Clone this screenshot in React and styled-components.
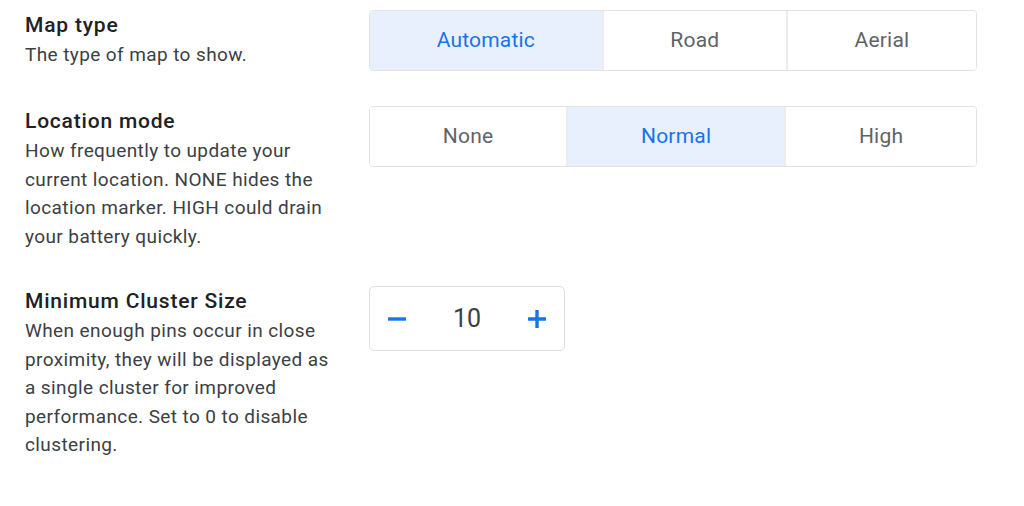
import React, { useState } from "react"
import styled, { createGlobalStyle } from "styled-components"

const GlobalStyle = createGlobalStyle`
  body {
    margin: 0;
    background: #ffffff;
    font-family: Roboto, "Liberation Sans", sans-serif;
  }
`

const Page = styled.div`
  padding: 10px 0 0 25px;
  display: flex;
  flex-direction: column;
  gap: 35px;
`

const Row = styled.div`
  display: flex;
  align-items: flex-start;
`

const Info = styled.div`
  width: 344px;
  flex: none;
`

const Title = styled.div`
  font-size: 21px;
  font-weight: 500;
  letter-spacing: 0.8px;
  color: #202124;
  line-height: 28px;
  padding-top: 1px;
  margin-bottom: 2px;
`

const Description = styled.div`
  font-size: 19px;
  letter-spacing: 0.4px;
  color: #3c4043;
  line-height: 28.5px;
  width: 312px;
`

const Segmented = styled.div`
  display: flex;
  width: 608px;
  height: 61px;
  border: 1.5px solid #e3e3e3;
  border-radius: 4px;
  box-sizing: border-box;
  overflow: hidden;
`

const Segment = styled.button`
  flex: 1 1 auto;
  border: none;
  border-left: ${(p) => (p.$first ? "none" : "2px solid #ececec")};
  background: ${(p) => (p.$active ? "#e8f0fe" : "#ffffff")};
  color: ${(p) => (p.$active ? "#1a73e8" : "#5f6368")};
  font-family: inherit;
  font-size: 21px;
  letter-spacing: 0.2px;
  padding: 0 20px 1px;
  cursor: pointer;
`

const Stepper = styled.div`
  display: flex;
  align-items: center;
  justify-content: space-between;
  width: 196px;
  height: 65px;
  border: 1.5px solid #e0e0e0;
  border-radius: 5px;
  box-sizing: border-box;
  padding: 0 17px;
`

const StepButton = styled.button`
  border: none;
  background: none;
  padding: 0;
  display: flex;
  cursor: pointer;
`

const Value = styled.span`
  font-size: 25px;
  color: #3c4043;
`

const SegmentedControl = ({ options, value, onChange }) => (
  <Segmented>
    {options.map((o, i) => (
      <Segment
        key={o}
        $first={i === 0}
        $active={o === value}
        onClick={() => onChange(o)}
      >
        {o}
      </Segment>
    ))}
  </Segmented>
)

const MinusIcon = () => (
  <svg width="20" height="20" viewBox="0 0 20 20">
    <path d="M1 10h18" stroke="#1a73e8" strokeWidth="3.4" />
  </svg>
)

const PlusIcon = () => (
  <svg width="20" height="20" viewBox="0 0 20 20">
    <path d="M1 10h18M10 1v18" stroke="#1a73e8" strokeWidth="3.4" />
  </svg>
)

export default function App() {
  const [mapType, setMapType] = useState("Automatic")
  const [mode, setMode] = useState("Normal")
  const [size, setSize] = useState(10)

  return (
    <Page>
      <GlobalStyle />
      <Row>
        <Info>
          <Title>Map type</Title>
          <Description>The type of map to show.</Description>
        </Info>
        <SegmentedControl
          options={["Automatic", "Road", "Aerial"]}
          value={mapType}
          onChange={setMapType}
        />
      </Row>
      <Row>
        <Info>
          <Title>Location mode</Title>
          <Description>
            How frequently to update your current location. NONE hides the
            location marker. HIGH could drain your battery quickly.
          </Description>
        </Info>
        <SegmentedControl
          options={["None", "Normal", "High"]}
          value={mode}
          onChange={setMode}
        />
      </Row>
      <Row>
        <Info>
          <Title>Minimum Cluster Size</Title>
          <Description>
            When enough pins occur in close proximity, they will be displayed
            as a single cluster for improved performance. Set to 0 to disable
            clustering.
          </Description>
        </Info>
        <Stepper>
          <StepButton onClick={() => setSize(Math.max(0, size - 1))}>
            <MinusIcon />
          </StepButton>
          <Value>{size}</Value>
          <StepButton onClick={() => setSize(size + 1)}>
            <PlusIcon />
          </StepButton>
        </Stepper>
      </Row>
    </Page>
  )
}
